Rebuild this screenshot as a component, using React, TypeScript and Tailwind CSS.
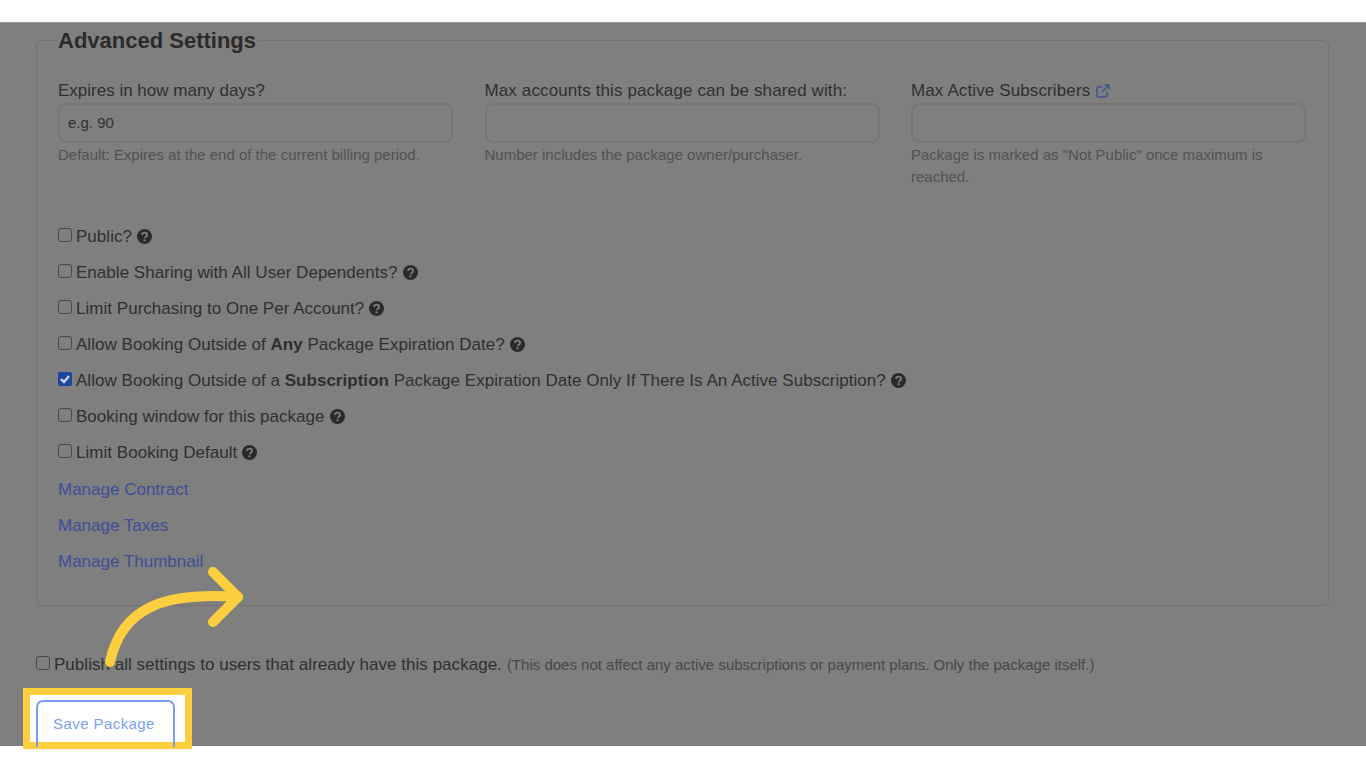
import React from "react";

const font = "font-['Liberation_Sans',Arial,sans-serif]";

const Help = () => (
  <svg viewBox="0 0 24 24" className="mb-[2px] ml-[5px] inline-block h-[15px] w-[15px] shrink-0">
    <circle cx="12" cy="12" r="12" fill="#2a2a2a" />
    <path d="M8 9.4c.2-2.3 1.9-3.6 4.1-3.6 2.3 0 4 1.4 4 3.4 0 1.600-.9 2.400-2 3.100-.9.600-1.200 1-1.200 2v.3" fill="none" stroke="#7f7f7f" strokeWidth="3" />
    <rect x="10.400" y="16.600" width="3.200" height="3" fill="#7f7f7f" />
  </svg>
);

const Field = ({ label, hint, placeholder, icon }: { label: string; hint: string; placeholder?: string; icon?: boolean }) => (
  <div className="flex w-[395px] flex-col">
    <label className={`flex h-[20px] items-center text-[17px] leading-[20px] text-[#2f2f2f] ${placeholder ? "" : "tracking-[0.12px]"}`}>
      {label}
      {icon && (
        <svg viewBox="0 0 24 24" fill="none" stroke="#41558f" strokeWidth="2.200" className="ml-[5px] h-[16px] w-[16px]">
          <path d="M18 13v6a2 2 0 0 1-2 2H5a2 2 0 0 1-2-2V8a2 2 0 0 1 2-2h6" />
          <path d="M14 3h7v7M21 3 10 14" />
        </svg>
      )}
    </label>
    <div className="mt-[2px] flex h-[40px] items-center rounded-[8px] border-2 border-[#767676] px-[8px] pt-[1px] text-[15px] text-[#303030]">
      {placeholder}
    </div>
    <p className="mt-[1px] text-[15px] leading-[22px] text-[#525252]">{hint}</p>
  </div>
);

const Check = ({ checked, children }: { checked?: boolean; children: React.ReactNode }) => (
  <div className="flex h-[36px] items-center text-[17px] tracking-[0.03px] text-[#2f2f2f]">
    {checked ? (
      <span className="mb-[4px] flex h-[14px] w-[14px] items-center justify-center rounded-[2px] bg-[#1c47a0]">
        <svg viewBox="0 0 14 14" className="h-[14px] w-[14px]" fill="none" stroke="#d8d8d8" strokeWidth="2.200">
          <path d="m3 7 3 3 5-6" />
        </svg>
      </span>
    ) : (
      <span className="mb-[4px] h-[14px] w-[14px] rounded-[3px] border border-[#484848]" />
    )}
    <span className="ml-[4px]">{children}</span>
    <Help />
  </div>
);

const Manage = ({ children }: { children: React.ReactNode }) => (
  <div className="flex h-[36px] items-center text-[17px] text-[#3d4f96]">{children}</div>
);

export default function App() {
  return (
    <div className={`${font} relative h-[768px] w-[1366px] overflow-hidden bg-white`}>
      <main className="mt-[22px] h-[724px] border-t border-[#9a9a9a] bg-[#7f7f7f] pl-[36px] pr-[37px]">
        <fieldset className="mt-[4px] h-[579px] rounded-[6px] border border-[#727272] pl-[21px] pr-[22px]">
          <legend className="relative top-[1px] ml-[-1px] px-[1px] text-[22px] font-bold leading-[26px] text-[#2b2b2b]">Advanced Settings</legend>
          <div className="mt-[28px] flex gap-[31.5px]">
            <Field label="Expires in how many days?" placeholder="e.g. 90" hint="Default: Expires at the end of the current billing period." />
            <Field label="Max accounts this package can be shared with:" hint="Number includes the package owner/purchaser." />
            <Field icon label="Max Active Subscribers" hint={'Package is marked as "Not Public" once maximum is reached.'} />
          </div>
          <div className="mt-[31px] flex flex-col">
            <Check>Public?</Check>
            <Check>Enable Sharing with All User Dependents?</Check>
            <Check>Limit Purchasing to One Per Account?</Check>
            <Check>
              Allow Booking Outside of <b>Any</b> Package Expiration Date?
            </Check>
            <Check checked>
              Allow Booking Outside of a <b>Subscription</b> Package Expiration Date Only If There Is An Active Subscription?
            </Check>
            <Check>Booking window for this package</Check>
            <Check>Limit Booking Default</Check>
            <div className="mt-[1px] flex flex-col">
              <Manage>Manage Contract</Manage>
              <Manage>Manage Taxes</Manage>
              <Manage>Manage Thumbnail</Manage>
            </div>
          </div>
        </fieldset>
        <div className="mt-[47px] flex h-[24px] items-center text-[#2f2f2f]">
          <span className="mb-[4px] h-[14px] w-[14px] rounded-[3px] border border-[#484848]" />
          <span className="ml-[4px] text-[17px] tracking-[0.03px]">Publish all settings to users that already have this package.</span>
          <span className="ml-[5px] text-[15px] text-[#484848]">(This does not affect any active subscriptions or payment plans. Only the package itself.)</span>
        </div>
      </main>

      {/* highlight round the save button */}
      <div className="absolute left-[23px] top-[688px] h-[61px] w-[169px] border-[7px] border-[#fdcf3e] bg-white">
        <div className="ml-[6px] mt-[5px] flex h-[47px] w-[139px] items-center justify-center rounded-t-[7px] border-x-2 border-t-2 border-[#7b9bf0] pr-[3px] text-[15px] tracking-[0.42px] text-[#7b9ff5]">
          Save Package
        </div>
      </div>

      {/* arrow */}
      <svg className="absolute left-[100px] top-[560px]" width="150" height="110" viewBox="0 0 150 110" fill="none" stroke="#fdcf3e" strokeWidth="10" strokeLinecap="round" strokeLinejoin="round">
        <path d="M10 102C22 46 66 32 138 37" />
        <path d="M113 12 138 37 113 62" />
      </svg>
    </div>
  );
}
